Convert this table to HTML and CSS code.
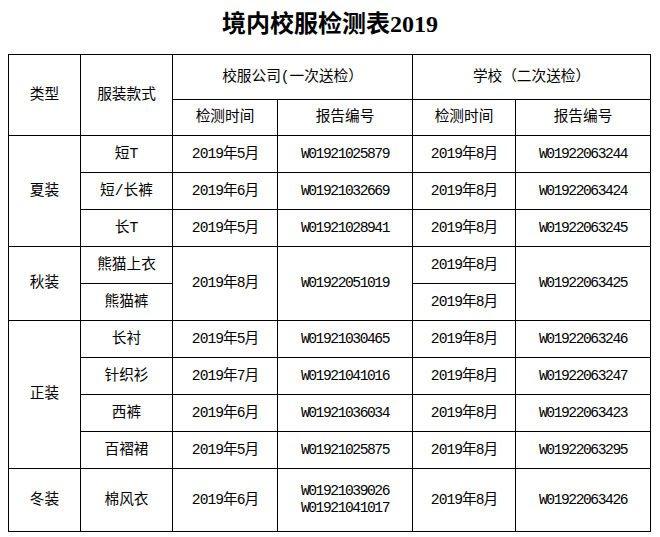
FILE: index.html
```html
<!DOCTYPE html>
<html lang="zh-CN">
<head>
<meta charset="utf-8">
<title>境内校服检测表2019</title>
<link rel="stylesheet" href="styles.css">
</head>
<body>
<div class="title">境内校服检测表2019</div>
<table class="sheet">
  <colgroup>
    <col class="c1"><col class="c2"><col class="c3"><col class="c4"><col class="c5"><col class="c6">
  </colgroup>
  <tr class="h1">
    <td rowspan="2">类型</td>
    <td rowspan="2">服装款式</td>
    <td colspan="2">校服公司(一次送检）</td>
    <td colspan="2">学校（二次送检）</td>
  </tr>
  <tr class="h2">
    <td>检测时间</td><td>报告编号</td><td>检测时间</td><td>报告编号</td>
  </tr>
  <tr class="r">
    <td rowspan="3">夏装</td>
    <td>短T</td><td class="date">2019年5月</td><td class="code">W01921025879</td><td class="date">2019年8月</td><td class="code">W01922063244</td>
  </tr>
  <tr class="r">
    <td>短/长裤</td><td class="date">2019年6月</td><td class="code">W01921032669</td><td class="date">2019年8月</td><td class="code">W01922063424</td>
  </tr>
  <tr class="r">
    <td>长T</td><td class="date">2019年5月</td><td class="code">W01921028941</td><td class="date">2019年8月</td><td class="code">W01922063245</td>
  </tr>
  <tr class="r">
    <td rowspan="2">秋装</td>
    <td>熊猫上衣</td><td class="date" rowspan="2">2019年8月</td><td class="code" rowspan="2">W01922051019</td><td class="date">2019年8月</td><td class="code" rowspan="2">W01922063425</td>
  </tr>
  <tr class="r">
    <td>熊猫裤</td><td class="date">2019年8月</td>
  </tr>
  <tr class="r">
    <td rowspan="4">正装</td>
    <td>长衬</td><td class="date">2019年5月</td><td class="code">W01921030465</td><td class="date">2019年8月</td><td class="code">W01922063246</td>
  </tr>
  <tr class="r">
    <td>针织衫</td><td class="date">2019年7月</td><td class="code">W01921041016</td><td class="date">2019年8月</td><td class="code">W01922063247</td>
  </tr>
  <tr class="r">
    <td>西裤</td><td class="date">2019年6月</td><td class="code">W01921036034</td><td class="date">2019年8月</td><td class="code">W01922063423</td>
  </tr>
  <tr class="r">
    <td>百褶裙</td><td class="date">2019年5月</td><td class="code">W01921025875</td><td class="date">2019年8月</td><td class="code">W01922063295</td>
  </tr>
  <tr class="r last">
    <td>冬装</td>
    <td>棉风衣</td><td class="date">2019年6月</td><td class="code">W01921039026<br>W01921041017</td><td class="date">2019年8月</td><td class="code">W01922063426</td>
  </tr>
</table>
</body>
</html>
```
FILE: styles.css
```css
html, body {
  margin: 0;
  padding: 0;
  background: #ffffff;
  color: #000000;
}
body {
  width: 660px;
  font-family: "Liberation Mono", "Noto Sans CJK SC", monospace;
}
.title {
  height: 54px;
  line-height: 48px;
  text-align: center;
  font-family: "Liberation Serif", "Noto Sans CJK SC", serif;
  font-weight: bold;
  font-size: 24px;
}
.sheet {
  margin-left: 8px;
  width: 642px;
  table-layout: fixed;
  border-collapse: collapse;
  font-size: 14.67px;
}
.c1 { width: 72px; }
.c2 { width: 92px; }
.c3 { width: 105px; }
.c4 { width: 135px; }
.c5 { width: 103px; }
.c6 { width: 135px; }
.sheet td {
  border: 1px solid #000000;
  padding: 0;
  text-align: center;
  vertical-align: middle;
  line-height: 17px;
}
.h1 { height: 45px; }
.h2 { height: 36px; }
.r { height: 37px; }
.r.last { height: 63px; }
.date { letter-spacing: -1px; }
.code { letter-spacing: -1.45px; }
```
